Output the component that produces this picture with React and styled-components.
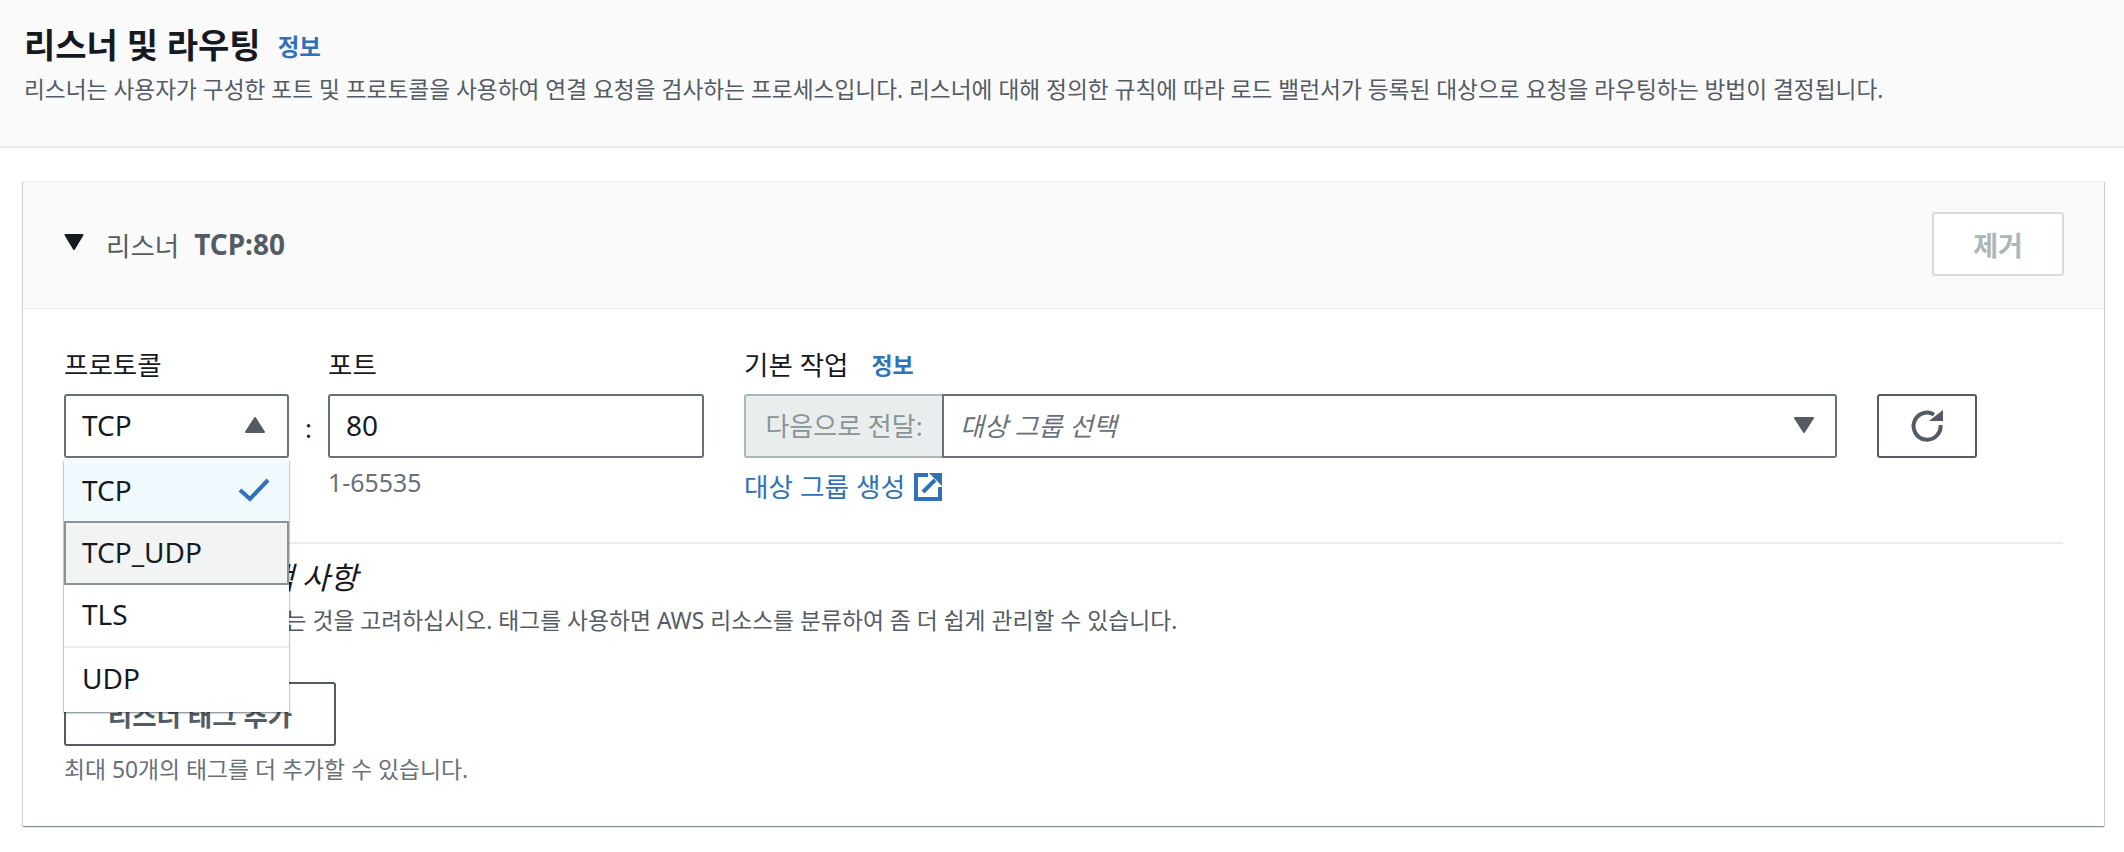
import React from "react";
import styled, { createGlobalStyle } from "styled-components";

const Global = createGlobalStyle`
  html, body { margin: 0; padding: 0; background: #fff; }
  body { font-family: "Noto Sans", "Noto Sans CJK KR", sans-serif; color: #16191f; }
  * { box-sizing: border-box; }
`;
const Page = styled.div`width: 2124px; height: 852px; overflow: hidden; background: #fff;`;
const PageHeader = styled.header`
  height: 148px; padding: 24px 24px 0; background: #fafafa; border-bottom: 2px solid #eaeded;
`;
const TitleRow = styled.div`display: flex; align-items: center; gap: 17px; height: 42px;`;
const Title = styled.h2`margin: 0; font-size: 34px; line-height: 42px; font-weight: 700; color: #16191f; white-space: nowrap;`;
const InfoLink = styled.a`font-size: 23.5px; font-weight: 700; color: #2f72b7; line-height: 26px; margin-top: 4px;`;
const Description = styled.p`margin: 9px 0 0; font-size: 22.7px; line-height: 30px; color: #545b64; white-space: nowrap;`;
const Card = styled.section`
  position: relative; width: 2081px; height: 645px; margin: 33px 0 0 23px; background: #fff;
  border-top: 1px solid #eaeded; box-shadow: 0 1px 1px 0 rgba(0,28,36,.3), 1px 1px 1px 0 rgba(0,28,36,.15), -1px 1px 1px 0 rgba(0,28,36,.15);
`;
const CardHeader = styled.div`
  height: 127px; padding: 30px 40px 0 41px; background: #fafafa; border-bottom: 1px solid #eaeded;
  display: flex; justify-content: space-between; align-items: flex-start;
`;
const Toggle = styled.div`display: flex; align-items: center; height: 64px;`;
const Caret = styled.svg`width: 20px; height: 16px; margin-right: 22px; margin-top: -4px; fill: #16191f;`;
const ToggleLabel = styled.span`font-size: 26.5px; color: #545b64; margin-right: 15px;`;
const ToggleValue = styled.span`font-size: 28px; font-weight: 700; color: #545b64;`;
const RemoveButton = styled.button`
  width: 132px; height: 64px; background: #fff; border: 2px solid #d5dbdb; border-radius: 3px; padding: 0;
  font: 700 27px "Noto Sans", "Noto Sans CJK KR", sans-serif; color: #aab7b8;
`;
const CardBody = styled.div`padding: 37px 41px 0;`;
const FormRow = styled.div`display: flex; align-items: flex-start; height: 196px;`;
const Field = styled.div`display: flex; flex-direction: column; width: ${p => p.$w}px; margin-right: ${p => p.$mr || 0}px;`;
const Label = styled.label`display: flex; align-items: center; gap: 23px; height: 34px; margin-bottom: 14px; font-size: 26.5px; color: #16191f; white-space: nowrap;`;
const SmallInfo = styled(InfoLink)`font-size: 23px;`;
const Control = styled.div`
  height: 64px; display: flex; align-items: center; justify-content: space-between; padding: 0 22px 2px 16px;
  background: #fff; border: 2px solid #687078; border-radius: 3px; font-size: 28px; color: #16191f;
`;
const Colon = styled.div`width: 39px; height: 64px; margin-top: 48px; display: flex; align-items: center; justify-content: center; font-size: 26px; padding-top: 4px;`;
const Hint = styled.div`margin-top: 9px; font-size: 24.9px; line-height: 30px; color: #687078;`;
const ForwardGroup = styled.div`display: flex; height: 64px;`;
const Addon = styled.div`
  width: 198px; flex: none; display: flex; align-items: center; justify-content: center; background: #eaeded;
  border: 2px solid #aab7b8; border-right: 0; border-radius: 3px 0 0 3px; font-size: 26px; color: #879596; white-space: nowrap; padding-bottom: 2px;
`;
const GroupSelect = styled(Control)`flex: 1; border-radius: 0 3px 3px 0; padding-left: 16px; padding-right: 21px; font-size: 26px;`;
const Placeholder = styled.span`font-style: italic; color: #687078;`;
const CreateLink = styled.a`display: flex; align-items: center; gap: 9px; margin-top: 12px; font-size: 26.7px; line-height: 34px; color: #2f72b7;`;
const RefreshButton = styled.button`
  width: 100px; height: 64px; margin: 48px 0 0 40px; display: flex; align-items: center; justify-content: center;
  background: #fff; border: 2px solid #545b64; border-radius: 3px; padding: 0;
`;
const Divider = styled.hr`margin: 0; border: 0; height: 2px; background: #eaeded;`;
const TagSection = styled.div`padding-top: 15px;`;
const TagHeading = styled.h3`margin: 0; font-size: 30.5px; line-height: 36px; font-weight: 400; font-style: italic; color: #16191f;`;
const TagText = styled.p`margin: 11px 0 0; font-size: 22.8px; line-height: 30px; color: #545b64; white-space: nowrap;`;
const AddButton = styled.button`
  display: block; width: 272px; height: 64px; margin-top: 46px; background: #fff; border: 2px solid #545b64; border-radius: 3px; padding: 0;
  font: 700 26.5px "Noto Sans", "Noto Sans CJK KR", sans-serif; color: #545b64;
`;
const TagHint = styled.p`margin: 9px 0 0; font-size: 22.85px; line-height: 30px; color: #687078;`;
const Menu = styled.ul`
  position: absolute; left: 41px; top: 278px; width: 225px; height: 252px; margin: 0; padding: 0; list-style: none;
  background: #fff; box-shadow: 0 1px 2px 0 rgba(0,28,36,.4), 1px 1px 1px 0 rgba(0,28,36,.1), -1px 1px 1px 0 rgba(0,28,36,.1);
`;
const Option = styled.li`
  height: 62px; display: flex; align-items: center; justify-content: space-between; padding: 0 19px 3px 18px; font-size: 28px; color: #16191f;
  background: ${p => p.$selected ? "#f1faff" : p.$hover ? "#f2f3f3" : "#fff"};
  ${p => p.$hover ? "border: 2px solid #879596; height: 64px; margin-top: -1px; padding-left: 16px;" : ""}
  ${p => p.$line ? "border-bottom: 2px solid #eaeded; height: 63px;" : ""}
`;

const App = () => (
  <Page>
    <Global />
    <PageHeader>
      <TitleRow>
        <Title>리스너 및 라우팅</Title>
        <InfoLink>정보</InfoLink>
      </TitleRow>
      <Description>리스너는 사용자가 구성한 포트 및 프로토콜을 사용하여 연결 요청을 검사하는 프로세스입니다. 리스너에 대해 정의한 규칙에 따라 로드 밸런서가 등록된 대상으로 요청을 라우팅하는 방법이 결정됩니다.</Description>
    </PageHeader>
    <Card>
      <CardHeader>
        <Toggle>
          <Caret viewBox="0 0 20 16"><path d="M1.5 1h17L10 15z" stroke="#16191f" strokeWidth="2" strokeLinejoin="round" /></Caret>
          <ToggleLabel>리스너</ToggleLabel>
          <ToggleValue>TCP:80</ToggleValue>
        </Toggle>
        <RemoveButton>제거</RemoveButton>
      </CardHeader>
      <CardBody>
        <FormRow>
          <Field $w={225}>
            <Label>프로토콜</Label>
            <Control>
              TCP
              <svg width="20" height="16" viewBox="0 0 20 16" fill="#545b64"><path d="M10 1l9 14H1z" stroke="#545b64" strokeWidth="2" strokeLinejoin="round" /></svg>
            </Control>
          </Field>
          <Colon>:</Colon>
          <Field $w={376} $mr={40}>
            <Label>포트</Label>
            <Control>80</Control>
            <Hint>1-65535</Hint>
          </Field>
          <Field $w={1093}>
            <Label>기본 작업 <SmallInfo>정보</SmallInfo></Label>
            <ForwardGroup>
              <Addon>다음으로 전달:</Addon>
              <GroupSelect>
                <Placeholder>대상 그룹 선택</Placeholder>
                <svg width="20" height="16" viewBox="0 0 20 16" fill="#545b64"><path d="M1 1h18l-9 14z" stroke="#545b64" strokeWidth="2" strokeLinejoin="round" /></svg>
              </GroupSelect>
            </ForwardGroup>
            <CreateLink>
              대상 그룹 생성
              <svg width="28" height="28" viewBox="0 0 28 28" fill="none" stroke="#2f72b7" strokeWidth="4"><path d="M14 2H2v24h24V14" /><path d="M21 7L9 19" /><path d="M15 0h13v13z" fill="#2f72b7" stroke="none" /></svg>
            </CreateLink>
          </Field>
          <RefreshButton>
            <svg width="32" height="32" viewBox="0 0 32 32" fill="none" stroke="#545b64" strokeWidth="4"><path d="M23 4.6A13.5 13.5 0 1 0 29.5 15" /><path d="M18 11h14V0z" fill="#545b64" stroke="none" /></svg>
          </RefreshButton>
        </FormRow>
        <Divider />
        <TagSection>
          <TagHeading>리스너 태그 - 선택 사항</TagHeading>
          <TagText>리스너에 태그를 추가하는 것을 고려하십시오. 태그를 사용하면 AWS 리소스를 분류하여 좀 더 쉽게 관리할 수 있습니다.</TagText>
          <AddButton>리스너 태그 추가</AddButton>
          <TagHint>최대 50개의 태그를 더 추가할 수 있습니다.</TagHint>
        </TagSection>
      </CardBody>
      <Menu>
        <Option $selected>
          TCP
          <svg width="32" height="24" viewBox="0 0 32 24" fill="none" stroke="#2f72b7" strokeWidth="4"><path d="M2 12l10 9L30 2" /></svg>
        </Option>
        <Option $hover>TCP_UDP</Option>
        <Option $line>TLS</Option>
        <Option>UDP</Option>
      </Menu>
    </Card>
  </Page>
);
export default App;
